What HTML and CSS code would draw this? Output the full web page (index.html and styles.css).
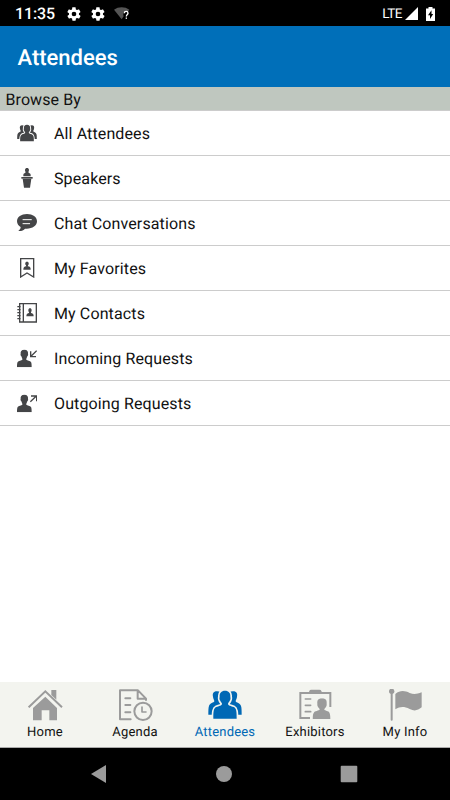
FILE: index.html
```html
<!DOCTYPE html>
<html lang="en">
<head>
<meta charset="utf-8">
<title>Attendees</title>
<link rel="stylesheet" href="styles.css">
</head>
<body>
<svg class="defs" aria-hidden="true">
  <defs>
    <symbol id="people" viewBox="0 0 102 87">
      <g fill="currentColor">
        <path d="M27 4C15 4 13 12 15 20C15 26 19 29 19 34C18 38 5 40 3 48C1 53 1 64 1 74H50V20Q40 4 27 4Z"/>
        <path d="M75 4C87 4 89 12 87 20C87 26 83 29 83 34C84 38 97 40 99 48C101 53 101 64 101 74H52V20Q62 4 75 4Z"/>
        <path class="cutout" d="M51 2C40 2 34 9 35 20C35 23 33 25 36 31C38 36 41 38 42 41C42 47 32 48 25 51C16 55 16 67 16 86H86C86 67 86 55 77 51C70 48 60 47 60 41C61 38 64 36 66 31C69 25 67 23 67 20C68 9 62 2 51 2Z"/>
      </g>
    </symbol>
    <symbol id="gear" viewBox="0 0 24 24">
      <path fill="currentColor" fill-rule="evenodd" d="M19.4 13c.1-.7.1-1.300 0-2l2.100-1.600c.2-.2.3-.4.1-.7l-2-3.400c-.1-.2-.4-.3-.6-.2l-2.500 1c-.5-.4-1.100-.7-1.700-1l-.4-2.600c0-.3-.2-.5-.5-.5h-4c-.3 0-.5.2-.5.5L9 5.100c-.6.3-1.200.6-1.700 1l-2.500-1c-.2-.1-.5 0-.6.2l-2 3.400c-.1.300-.1.500.1.700L4.500 11c-.1.700-.1 1.300 0 2l-2.100 1.600c-.2.200-.3.400-.1.700l2 3.400c.1.200.4.300.6.200l2.500-1c.5.400 1.100.7 1.700 1l.4 2.600c0 .3.200.5.500.5h4c.3 0 .5-.2.500-.5l.4-2.600c.6-.3 1.200-.6 1.700-1l2.500 1c.2.100.5 0 .6-.2l2-3.400c.1-.3.100-.5-.1-.7zM12 15.500a3.500 3.500 0 1 1 0-7 3.500 3.500 0 0 1 0 7z"/>
    </symbol>
    <symbol id="person" viewBox="0 0 48 54">
      <path fill="currentColor" d="M23 1C14 1 11 6 12 13C11 16 12 19 14 21C16 27 18 29 17 31C15 34 5 34 3 38C1 42 1 48 1 54H45C45 48 45 42 43 38C41 34 31 34 29 31C28 29 30 27 32 21C34 19 35 16 34 13C35 6 32 1 23 1Z"/>
    </symbol>
  </defs>
</svg>

<div class="status">
  <span class="clock">11:35</span>
  <svg class="gear"><use href="#gear"/></svg>
  <svg class="gear"><use href="#gear"/></svg>
  <svg class="wifi" viewBox="0 0 48 38"><path fill="#555" d="M0 8C13-2 33-2 46 8L42 13C32 9 25 17 29 27L23 36Z"/><path fill="none" stroke="#fff" stroke-width="4" d="M31 18C31 11 42 11 42 18C42 22 37 22 37 28"/><rect x="35" y="31" width="4" height="4" fill="#fff"/></svg>
  <span class="lte">LTE</span>
  <svg class="signal" viewBox="0 0 13 13"><path fill="#fff" d="M13 0V13H0Z"/></svg>
  <svg class="battery" viewBox="0 0 9 14"><path fill="#fff" d="M2.500 0H6.500V1.500H9V14H0V1.500H2.500Z"/><path fill="#000" d="M5.500 3.300L2 8.300H4V12L7.200 6.900H5.500Z"/></svg>
</div>
<header class="header"><h1>Attendees</h1></header>
<h2 class="section">Browse By</h2>
<ul class="list">
  <li><svg class="icon people"><use href="#people"/></svg><span>All Attendees</span></li>
  <li>
    <svg class="icon" viewBox="0 0 60 60"><g fill="#444547"><path d="M30 0C23 0 23 8 26 12C26 15 19 16 19 20V25H41V20C41 16 34 15 34 12C37 8 37 0 30 0Z"/><rect x="13" y="27" width="34" height="5"/><path d="M17 32H43L39 59H21Z"/></g></svg>
    <span>Speakers</span></li>
  <li>
    <svg class="icon" viewBox="0 0 60 60"><path fill="#444547" d="M30 3C13 3 0 12 0 25C0 33 5 39 11 42C11 48 8 50 4 54C13 55 20 51 24 47C44 49 60 39 60 25C60 12 47 3 30 3Z"/><path stroke="#fff" stroke-width="3" stroke-linecap="round" d="M18 20H43M18 32H38"/></svg>
    <span>Chat Conversations</span></li>
  <li>
    <svg class="icon" viewBox="0 0 60 60"><path fill="none" stroke="#444547" stroke-width="4" d="M11 2H50V57L30 45L11 57Z"/><g fill="#444547"><path d="M30 11C23 11 24 19 27 22V26H33V22C36 19 37 11 30 11Z"/><path d="M19 35C19 28 22 26 27 25H33C39 26 41 28 41 35Z"/></g></svg>
    <span>My Favorites</span></li>
  <li>
    <svg class="icon" viewBox="0 0 60 60"><path fill="none" stroke="#444547" stroke-width="4" d="M8 2H58V57H8ZM19 2V57M1 11H11M1 20H11M1 29H11M1 38H11M1 47H11"/><g fill="#444547"><path d="M39 16C33 16 33 24 36 28V32H42V28C45 24 45 16 39 16Z"/><path d="M28 40C28 33 31 31 36 30H42C47 31 50 33 50 40Z"/></g></svg>
    <span>My Contacts</span></li>
  <li>
    <svg class="icon" viewBox="0 0 60 60"><use href="#person" x="-1" y="4" width="48" height="54"/><path fill="none" stroke="#444547" stroke-width="4" d="M59 8L42 25M41 10V26H57"/></svg>
    <span>Incoming Requests</span></li>
  <li>
    <svg class="icon" viewBox="0 0 60 60"><use href="#person" x="-1" y="4" width="48" height="54"/><path fill="none" stroke="#444547" stroke-width="4" d="M40 26L58 9M42 9H59V25"/></svg>
    <span>Outgoing Requests</span></li>
</ul>
<nav class="tabs">
  <a class="tab"><svg viewBox="0 0 105 96"><g fill="#9b9b9b"><path d="M70 3H85V32L70 18Z"/><path d="M52 23L87 57V94H64V64H41V94H15V57Z"/></g><path fill="none" stroke="#9b9b9b" stroke-width="6" d="M2 55L52 7L102 55"/></svg><span>Home</span></a>
  <a class="tab"><svg viewBox="0 0 105 96"><g fill="none" stroke="#9b9b9b" stroke-width="6" stroke-linecap="round" stroke-linejoin="round"><path d="M38 91H6V4H60L84 29V33M59 5V29H83M22 28H37M22 48H37M22 70H37"/><circle cx="75" cy="67" r="26"/><path stroke-width="5" d="M72 54V69H84"/></g></svg><span>Agenda</span></a>
  <a class="tab active"><svg class="crowd"><use href="#people"/></svg><span>Attendees</span></a>
  <a class="tab"><svg viewBox="0 0 105 96"><path fill="none" stroke="#9b9b9b" stroke-width="6" d="M36 87H7V12H97V54"/><path fill="#9b9b9b" d="M34 6Q35 2 40 2H64Q69 2 70 6L74 15H31Z"/><path stroke="#9b9b9b" stroke-width="5" stroke-linecap="round" d="M22 30H38M22 49H38M22 68H38"/><svg class="visitor" x="43" y="28" width="56" height="62" viewBox="0 0 56 62"><path fill="#9b9b9b" d="M29 0C17 0 14 7 15 16C14 22 17 27 22 32C24 37 10 37 6 41C2 45 1 53 1 62H54C54 53 53 45 50 41C46 37 34 37 36 32C41 27 44 22 43 16C44 7 41 0 29 0Z"/></svg></svg><span>Exhibitors</span></a>
  <a class="tab"><svg viewBox="0 0 105 96"><circle cx="11" cy="7" r="8" fill="#9b9b9b"/><path stroke="#9b9b9b" stroke-width="6" stroke-linecap="round" d="M11 9V92"/><path fill="#9b9b9b" d="M22 15C37 3 50 5 65 12C78 17 87 15 101 10V55C89 65 79 67 65 60C48 52 37 52 22 61Z"/></svg><span>My Info</span></a>
</nav>
<div class="system">
  <svg viewBox="0 0 18 18"><path fill="#9b9b9b" d="M1 9L16 0V18Z"/></svg>
  <svg viewBox="0 0 18 18"><circle cx="9" cy="9" r="8" fill="#9b9b9b"/></svg>
  <svg viewBox="0 0 18 18"><rect x=".7" y=".7" width="16.600" height="16.600" rx="1" fill="#9b9b9b"/></svg>
</div>
</body>
</html>
```
FILE: styles.css
```css
* { box-sizing: border-box; }
body {
  margin: 0;
  height: 800px;
  display: flex;
  flex-direction: column;
  background: #fff;
  color: #111;
  font-family: Roboto, sans-serif;
  text-rendering: geometricPrecision;
  overflow: hidden;
}
svg { display: block; flex: none; }
.defs { position: absolute; width: 0; height: 0; }
.cutout { stroke: var(--gap, #fff); stroke-width: 10; paint-order: stroke; }
.status {
  height: 26px;
  background: #000;
  color: #fff;
  display: flex;
  align-items: center;
  padding: 1px 15px 0 15px;
}
.clock { font-size: 16px; font-weight: 500; width: 51px; line-height: 24px; letter-spacing: -0.15px; }
.gear { width: 16px; height: 16px; margin-right: 8px; }
.wifi { width: 16px; height: 13px; }
.lte { margin-left: auto; font-size: 13.5px; letter-spacing: -0.5px; }
.signal { width: 13px; height: 13px; margin: 0 8px 0 3px; }
.battery { width: 9px; height: 14px; }
.header {
  height: 61px;
  background: #006fb9;
  color: #fff;
  display: flex;
  align-items: center;
  padding: 4px 17.5px 0;
}
.header h1 { margin: 0; font-size: 22px; font-weight: 500; }
.section {
  margin: 0;
  height: 24px;
  padding-left: 5.5px;
  background: #bfc7bf;
  border-bottom: 1px solid #ccc;
  font-size: 16px;
  font-weight: 400;
  line-height: 25px;
  letter-spacing: 0.08px;
}
.list { list-style: none; margin: 0; padding: 0; }
.list li {
  height: 45px;
  display: flex;
  align-items: center;
  gap: 17px;
  padding-left: 17px;
  border-bottom: 1px solid #ccc;
  font-size: 16px;
  letter-spacing: 0.12px;
}
.icon { width: 20px; height: 20px; color: #444547; }
.tabs {
  margin-top: auto;
  height: 66px;
  background: #f3f4ef;
  border-bottom: 1px solid #aaa;
  display: grid;
  grid-template-columns: repeat(5, 1fr);
}
.tab {
  display: flex;
  flex-direction: column;
  align-items: center;
  padding-top: 7px;
  font-size: 13px;
  line-height: 16px;
  letter-spacing: 0.2px;
  --gap: #f3f4ef;
}
.tab > svg { width: 35px; height: 32px; margin-bottom: 4px; }
.tab .crowd { width: 34px; height: 29px; margin: 1px 0 6px; }
.visitor path { stroke: var(--gap); stroke-width: 5; paint-order: stroke; }
.active { color: #0068b5; }
.system {
  height: 52px;
  background: #000;
  display: flex;
  justify-content: space-between;
  padding: 17px 92px 0 90px;
}
.system svg { width: 18px; height: 18px; }
```
